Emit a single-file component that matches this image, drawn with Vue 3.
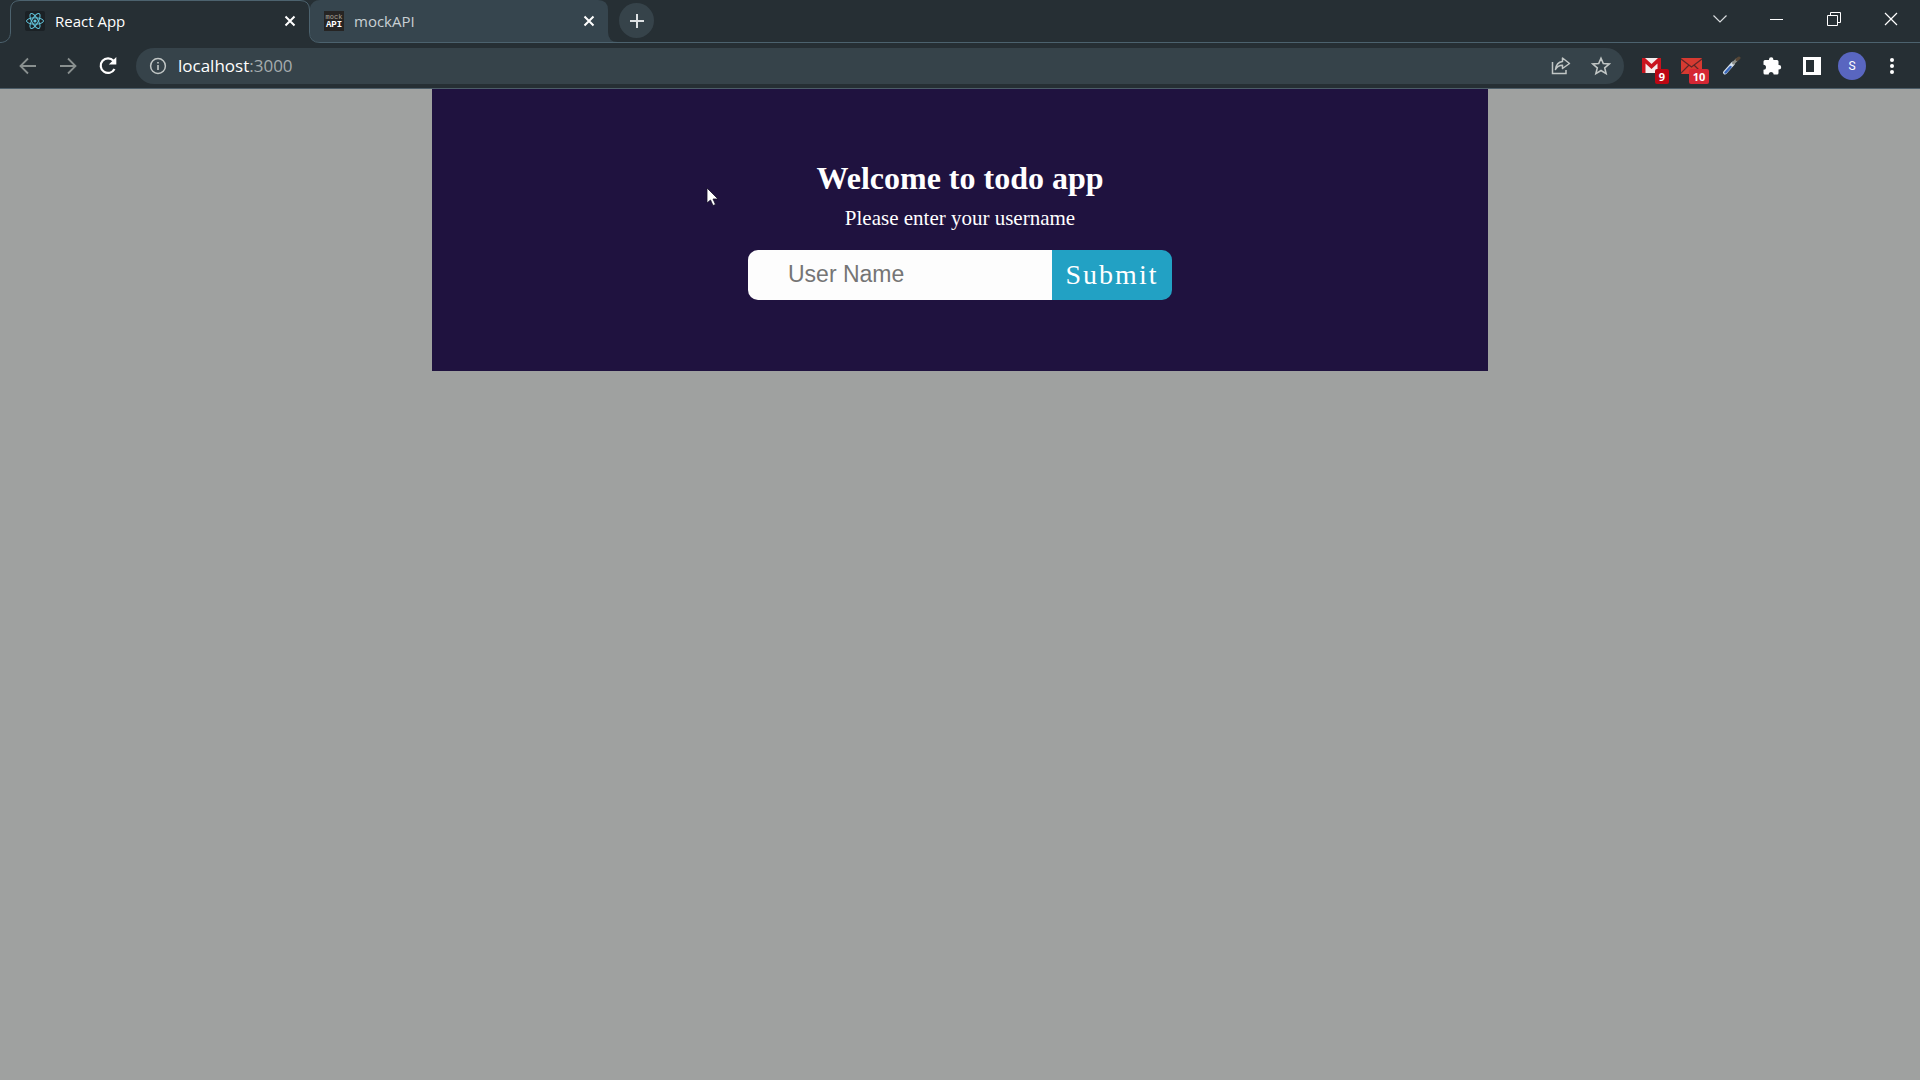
<script setup>
import { ref } from 'vue'

const address = ref('localhost:3000')
const userName = ref('')
</script>

<template>
  <div class="browser">
    <header class="chrome">
      <div class="strip">
        <svg class="outline" width="620" height="43" viewBox="0 0 620 43" fill="none" aria-hidden="true">
          <path d="M310 8Q312 0 320 0H598Q608 0 608 10V32Q608 42 618 42H320Q310 42 310 32Z" fill="#36454e" />
          <path d="M0 42.5C6 42.5 10.5 39 10.5 32V10Q10.5 .5 20 .5H300Q309.5 .5 309.5 10V32Q309.5 42.5 320 42.5H620" stroke="#4c626e" />
        </svg>
        <div class="tab active">
          <svg class="fav" viewBox="0 0 20 20" fill="none" stroke="#61c5dc" aria-hidden="true">
            <rect width="20" height="20" rx="2" fill="#1b2125" stroke="none" />
            <ellipse cx="10" cy="10" rx="8.5" ry="3.2" />
            <ellipse cx="10" cy="10" rx="8.5" ry="3.2" transform="rotate(60 10 10)" />
            <ellipse cx="10" cy="10" rx="8.5" ry="3.2" transform="rotate(120 10 10)" />
            <circle cx="10" cy="10" r="1.6" fill="#61c5dc" stroke="none" />
          </svg>
          <span class="title">React App</span>
          <button class="icon close" aria-label="Close React App">
            <svg width="12" height="12" viewBox="0 0 12 12"><path d="M1.5 1.5L10.5 10.5M10.5 1.5L1.5 10.5" stroke="currentColor" stroke-width="2" /></svg>
          </button>
        </div>
        <div class="tab">
          <span class="fav mock" aria-hidden="true"><span>mock</span><b>API</b></span>
          <span class="title">mockAPI</span>
          <button class="icon close" aria-label="Close mockAPI">
            <svg width="12" height="12" viewBox="0 0 12 12"><path d="M1.5 1.5L10.5 10.5M10.5 1.5L1.5 10.5" stroke="currentColor" stroke-width="2" /></svg>
          </button>
        </div>
        <button class="icon plus" aria-label="New tab">
          <svg width="16" height="16" viewBox="0 0 16 16"><path d="M8 1V15M1 8H15" stroke="currentColor" stroke-width="2" /></svg>
        </button>
        <div class="window">
          <button class="icon" aria-label="Search tabs"><svg width="14" height="14" viewBox="0 0 14 14" fill="none"><path d="M.5 3.5L7 10L13.5 3.5" stroke="#d8dcde" stroke-width="1.2" /></svg></button>
          <button class="icon" aria-label="Minimize"><svg width="14" height="14" viewBox="0 0 14 14"><path d="M0 7.5H13" stroke="#fff" /></svg></button>
          <button class="icon" aria-label="Restore"><svg width="14" height="14" viewBox="0 0 14 14" fill="none"><path d="M.5 3.5H10.5V13.5H.5ZM3.5 3V.5H13.5V10.5H11" stroke="#fff" /></svg></button>
          <button class="icon" aria-label="Close window"><svg width="14" height="14" viewBox="0 0 14 14"><path d="M1 1L13 13M13 1L1 13" stroke="#fff" stroke-width="1.2" /></svg></button>
        </div>
      </div>

      <div class="toolbar">
        <button class="icon nav dim" aria-label="Back"><svg width="18" height="18" viewBox="0 0 18 18" fill="none"><path d="M17 9H2M9 1.5L1.5 9L9 16.5" stroke="currentColor" stroke-width="1.8" /></svg></button>
        <button class="icon nav dim" aria-label="Forward"><svg width="18" height="18" viewBox="0 0 18 18" fill="none"><path d="M1 9H16M9 1.5L16.5 9L9 16.5" stroke="currentColor" stroke-width="1.8" /></svg></button>
        <button class="icon nav" aria-label="Reload"><svg width="20" height="20" viewBox="0 0 20 20" fill="none"><path d="M16.5 13A7.3 7.3 0 1 1 15.5 4.8" stroke="currentColor" stroke-width="2.2" /><path d="M18.3 1V8.5H10.8Z" fill="currentColor" /></svg></button>
        <div class="omnibox">
          <button class="icon info" aria-label="Site information"><svg width="18" height="18" viewBox="0 0 18 18" fill="none"><circle cx="9" cy="9" r="7.4" stroke="currentColor" stroke-width="1.5" /><path d="M9 8V13M9 5V6.6" stroke="currentColor" stroke-width="1.6" /></svg></button>
          <div class="address">
            <span class="url" aria-hidden="true">localhost<span>:3000</span></span>
            <input v-model="address" class="field" aria-label="Address" spellcheck="false">
          </div>
          <button class="icon action" aria-label="Share"><svg width="20" height="20" viewBox="0 0 20 20" fill="none" stroke="currentColor" stroke-width="1.5"><path d="M1.5 6V17.5H15V14" /><path d="M11.500 5.500V2L18.500 7.500L11.500 12.500V9.300C8 9.300 6 10.500 4.500 13.500C5 9 7.500 6 11.500 5.500Z" stroke-linejoin="round" /></svg></button>
          <button class="icon action" aria-label="Bookmark"><svg width="20" height="20" viewBox="0 0 20 20" fill="none"><path d="M10 2.200L12.300 7.500L18.200 8L13.700 11.900L15.100 17.600L10 14.500L4.900 17.600L6.300 11.900L1.800 8L7.700 7.500Z" stroke="currentColor" stroke-width="1.6" /></svg></button>
        </div>
        <div class="extensions">
          <button class="icon ext" aria-label="Gmail">
            <svg width="22" height="20" viewBox="0 0 22 20"><rect x="1" y="2" width="19" height="15" rx="1" fill="#f4eeee" /><path d="M1 2H4L10.500 8L17 2H20V17H16.500V7.500L10.500 13L4.500 7.500V17H1Z" fill="#c9151f" /></svg>
            <span class="badge">9</span>
          </button>
          <button class="icon ext" aria-label="Mail">
            <svg width="22" height="20" viewBox="0 0 22 20"><rect y="2" width="21" height="16" rx="1" fill="#d63a31" /><path d="M0 3L10.500 11L21 3M0 17L8 9M21 17L13 9" fill="none" stroke="#5e2728" stroke-width="1.2" /></svg>
            <span class="badge light">10</span>
          </button>
          <button class="icon ext" aria-label="Color picker">
            <svg width="20" height="20" viewBox="0 0 20 20" fill="none" stroke-linecap="round"><path d="M3 16.500L11 7.500" stroke="#d8e3ee" stroke-width="4" /><path d="M3.500 16.500L8.500 11" stroke="#3867bb" stroke-width="2.5" /><path d="M11.500 7L15 3.500" stroke="#8c8e87" stroke-width="3" /><path d="M15 3.500L17 2" stroke="#564636" stroke-width="3" /></svg>
          </button>
          <button class="icon ext" aria-label="Extensions">
            <svg width="20" height="20" viewBox="0 0 20 20"><path d="M7 4V3.500A2.200 2.200 0 0 1 11.400 3.500V4H15A1.500 1.500 0 0 1 16.500 5.500V9H17A2.200 2.200 0 0 1 17 13.400H16.500V17A1.500 1.500 0 0 1 15 18.500H11.700A2.500 2.500 0 0 0 6.700 18.500H3A1.500 1.500 0 0 1 1.500 17V13.700A2.500 2.500 0 0 0 1.500 8.700V5.500A1.500 1.500 0 0 1 3 4Z" fill="#fff" /></svg>
          </button>
          <button class="icon ext" aria-label="Side panel">
            <svg width="18" height="18" viewBox="0 0 18 18"><path fill-rule="evenodd" d="M0 0H18V18H0ZM3 3V15H11V3Z" fill="#fff" /></svg>
          </button>
          <button class="icon ext" aria-label="Profile"><span class="avatar">S</span></button>
          <button class="icon ext" aria-label="Menu">
            <svg width="6" height="18" viewBox="0 0 6 18" fill="#fff"><circle cx="3" cy="3" r="2" /><circle cx="3" cy="9" r="2" /><circle cx="3" cy="15" r="2" /></svg>
          </button>
        </div>
      </div>
    </header>

    <main class="page">
      <section class="panel">
        <h1>Welcome to todo app</h1>
        <label for="username">Please enter your username</label>
        <form class="login" @submit.prevent>
          <input id="username" v-model="userName" type="text" placeholder="User Name">
          <button type="submit">Submit</button>
        </form>
      </section>
      <svg class="cursor" width="14" height="20" viewBox="0 0 14 20" aria-hidden="true"><path d="M1 1V16L4.500 13L7 18.500L9.500 17.500L7 12H12Z" fill="#fff" stroke="#16102a" stroke-width=".8" /></svg>
    </main>
  </div>
</template>

<style>
body {
  margin: 0;
  background: #9fa1a0;
}
</style>

<style scoped>
.browser {
  min-height: 100vh;
  display: flex;
  flex-direction: column;
}
.chrome {
  background: #262f34;
  border-bottom: 1px solid #4c5d68;
  font-family: "Segoe UI", "Open Sans", "Noto Sans", sans-serif;
}
.icon {
  display: flex;
  align-items: center;
  justify-content: center;
  padding: 0;
  border: 0;
  background: none;
  color: #fff;
  font-family: inherit;
}
.strip {
  position: relative;
  box-sizing: border-box;
  display: flex;
  align-items: center;
  height: 43px;
  padding: 0 1px 2px 10px;
}
.strip::after {
  content: "";
  position: absolute;
  left: 620px;
  right: 0;
  bottom: 0;
  height: 1px;
  background: #4c626e;
}
.outline {
  position: absolute;
  left: 0;
  top: 0;
}
.tab {
  position: relative;
  box-sizing: border-box;
  display: flex;
  align-items: center;
  width: 299px;
  padding: 0 11px 0 15px;
  color: #c9d0d4;
}
.tab.active {
  color: #fff;
}
.fav {
  width: 20px;
  height: 20px;
  flex: none;
}
.mock {
  display: flex;
  flex-direction: column;
  justify-content: center;
  background: #262423;
  color: #aaa49b;
  text-align: center;
  font: 7px/8px "Liberation Mono", monospace;
}
.mock b {
  color: #fff;
  font-size: 9px;
}
.title {
  flex: 1;
  margin-left: 10px;
  font-size: 15px;
  line-height: 20px;
}
.close {
  width: 16px;
  height: 16px;
}
.plus {
  width: 35px;
  height: 35px;
  margin-left: 11px;
  border-radius: 50%;
  background: #36434a;
  color: #dde1e3;
}
.window {
  display: flex;
  align-self: flex-start;
  margin-left: auto;
  height: 37px;
}
.window .icon {
  width: 57px;
}
.toolbar {
  display: flex;
  align-items: center;
  height: 45px;
  padding: 0 8px;
}
.nav {
  width: 40px;
  height: 36px;
}
.dim {
  color: #89908f;
}
.omnibox {
  flex: 1;
  display: flex;
  align-items: center;
  height: 36px;
  margin-left: 8px;
  padding: 0 3px 0 12px;
  border-radius: 18px;
  background: #36434a;
}
.info {
  width: 20px;
  color: #c1c6c5;
}
.address {
  position: relative;
  flex: 1;
  margin-left: 10px;
  font-size: 17px;
  line-height: 24px;
}
.url {
  color: #fff;
}
.url span {
  color: #a5acae;
}
.field {
  position: absolute;
  inset: 0;
  width: 100%;
  padding: 0;
  border: 0;
  outline: 0;
  background: none;
  color: transparent;
  font: inherit;
}
.action {
  width: 40px;
  height: 36px;
  color: #c1c6c5;
}
.extensions {
  display: flex;
  margin-left: 8px;
}
.ext {
  position: relative;
  width: 40px;
  height: 36px;
}
.badge {
  position: absolute;
  left: 23px;
  top: 21px;
  min-width: 14px;
  border-radius: 2px;
  background: #bd0713;
  font-size: 11px;
  font-weight: 700;
  line-height: 15px;
  text-align: center;
}
.badge.light {
  left: 17px;
  min-width: 20px;
  background: #d52734;
}
.avatar {
  width: 28px;
  border-radius: 50%;
  background: #5966c0;
  font: 12px/28px Roboto, sans-serif;
}
.page {
  position: relative;
  flex: 1;
}
.panel {
  box-sizing: border-box;
  display: flex;
  flex-direction: column;
  align-items: center;
  width: 55%;
  margin: 0 auto;
  padding: 71px 16px;
  background: #1f123f;
  color: #fff;
  font-family: "Liberation Serif", serif;
}
h1 {
  margin: 0;
  font-size: 32px;
  line-height: 36px;
}
label {
  margin-top: 10px;
  font-size: 21px;
  line-height: 24px;
}
.login {
  display: flex;
  width: 100%;
  max-width: 424px;
  height: 50px;
  margin-top: 20px;
  border-radius: 10px;
  overflow: hidden;
}
.login input {
  flex: 1;
  min-width: 0;
  padding: 0 40px 2px;
  border: 0;
  outline: 0;
  background: #fdfdfd;
  color: #333;
  font: 23px "Liberation Sans", sans-serif;
}
.login input::placeholder {
  color: #757575;
}
.login button {
  width: 120px;
  padding: 0;
  border: 0;
  background: #22a1c4;
  color: #fff;
  font: 28px "Liberation Serif", serif;
  letter-spacing: 2px;
}
.cursor {
  position: absolute;
  left: 706px;
  top: 98px;
}
</style>
